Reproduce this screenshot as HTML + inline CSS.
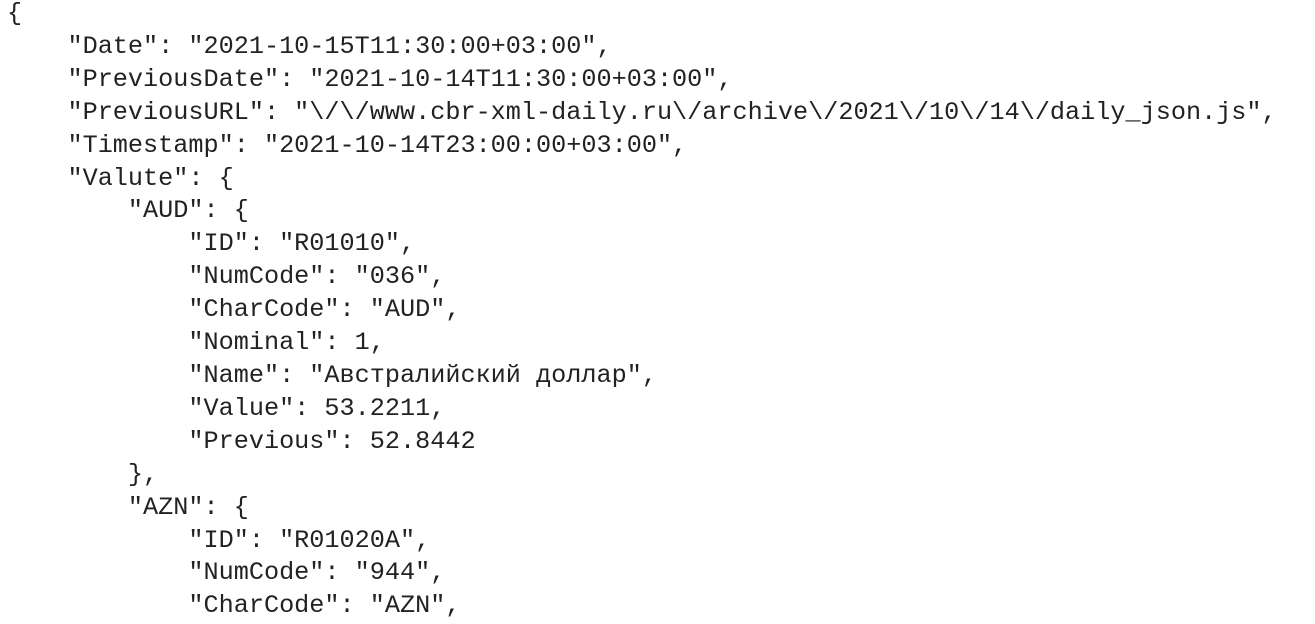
<!DOCTYPE html>
<html><head><meta charset="utf-8"><style>
html,body{margin:0;padding:0;background:#fff;width:1315px;height:624px;overflow:hidden}
pre{margin:0;position:absolute;left:7px;top:-2px;font-family:"Liberation Mono","DejaVu Sans Mono",monospace;font-size:25.2px;line-height:32.9px;color:#222;white-space:pre}
</style></head><body><pre>{
    "Date": "2021-10-15T11:30:00+03:00",
    "PreviousDate": "2021-10-14T11:30:00+03:00",
    "PreviousURL": "\/\/www.cbr-xml-daily.ru\/archive\/2021\/10\/14\/daily_json.js",
    "Timestamp": "2021-10-14T23:00:00+03:00",
    "Valute": {
        "AUD": {
            "ID": "R01010",
            "NumCode": "036",
            "CharCode": "AUD",
            "Nominal": 1,
            "Name": "Австралийский доллар",
            "Value": 53.2211,
            "Previous": 52.8442
        },
        "AZN": {
            "ID": "R01020A",
            "NumCode": "944",
            "CharCode": "AZN",
</pre></body></html>
